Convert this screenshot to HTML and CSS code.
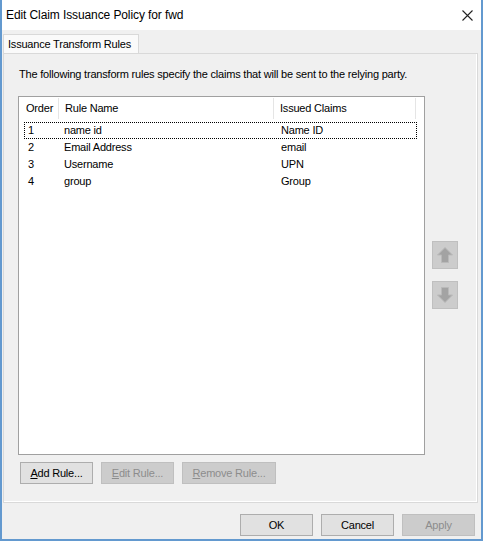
FILE: index.html
```html
<!DOCTYPE html>
<html>
<head>
<meta charset="utf-8">
<title>Edit Claim Issuance Policy for fwd</title>
<link rel="stylesheet" href="styles.css">
</head>
<body>
<div class="window">
  <div class="titlebar">
    <span class="title">Edit Claim Issuance Policy for fwd</span>
    <svg class="close" width="11" height="11" viewBox="0 0 11 11"><path d="M0.5 0.5 L10.5 10.5 M10.5 0.5 L0.5 10.5" stroke="#222" stroke-width="1.1" fill="none"/></svg>
  </div>
  <div class="content">
    <div class="tabs"><div class="tab">Issuance Transform Rules</div></div>
    <div class="panel">
      <p class="desc">The following transform rules specify the claims that will be sent to the relying party.</p>
      <div class="main">
        <div class="listview">
          <div class="lv-header">
            <div class="hc hc1">Order</div>
            <div class="hc hc2">Rule Name</div>
            <div class="hc hc3">Issued Claims</div>
          </div>
          <div class="rows">
            <div class="row focused"><span class="c1">1</span><span class="c2">name id</span><span class="c3">Name ID</span></div>
            <div class="row"><span class="c1">2</span><span class="c2">Email Address</span><span class="c3">email</span></div>
            <div class="row"><span class="c1">3</span><span class="c2">Username</span><span class="c3">UPN</span></div>
            <div class="row"><span class="c1">4</span><span class="c2">group</span><span class="c3">Group</span></div>
          </div>
        </div>
        <div class="side">
          <div class="arrow-btn">
            <svg width="16" height="16" viewBox="0 0 16 16"><polygon points="8,0.5 15.5,8 11.5,8 11.5,15.5 4.5,15.5 4.5,8 0.5,8" fill="#a3a3a3" stroke="#b9b9b9" stroke-width="1"/></svg>
          </div>
          <div class="arrow-btn">
            <svg width="16" height="16" viewBox="0 0 16 16"><polygon points="8,15.5 15.5,8 11.5,8 11.5,0.5 4.5,0.5 4.5,8 0.5,8" fill="#a3a3a3" stroke="#b9b9b9" stroke-width="1"/></svg>
          </div>
        </div>
      </div>
      <div class="rule-buttons">
        <button class="btn w73"><u>A</u>dd Rule...</button>
        <button class="btn w73 disabled"><u>E</u>dit Rule...</button>
        <button class="btn w94 disabled"><u>R</u>emove Rule...</button>
      </div>
    </div>
    <div class="footer">
      <button class="btn w73">OK</button>
      <button class="btn w73">Cancel</button>
      <button class="btn w73 disabled">Apply</button>
    </div>
  </div>
</div>
</body>
</html>
```
FILE: styles.css
```css
* { box-sizing: border-box; }
body {
  margin: 0;
  font-family: "Liberation Sans", Arial, sans-serif;
  font-size: 11px;
  letter-spacing: -0.2px;
  color: #000;
}
.window {
  width: 483px;
  height: 541px;
  border: 2px solid #6399cf;
  border-top: 0;
  display: flex;
  flex-direction: column;
  background: #f0f0f0;
}
.titlebar {
  height: 30px;
  flex: none;
  background: #fff;
  display: flex;
  align-items: center;
  justify-content: space-between;
  padding: 0 8px 0 4px;
}
.title {
  font-size: 12px;
  letter-spacing: -0.1px;
  color: #000;
}
.content {
  flex: 1;
  display: flex;
  flex-direction: column;
  padding: 4px 0 0 1px;
}
.tabs { display: flex; }
.tab {
  width: 136px;
  height: 19px;
  border: 1px solid #d9d9d9;
  border-bottom: 0;
  background: #fafafa;
  padding-left: 4px;
  line-height: 18px;
}
.panel {
  width: 475px;
  height: 450px;
  border: 1px solid #d9d9d9;
  box-shadow: inset -1px -1px 0 #fff;
  padding: 12px 0 0 14px;
}
.desc {
  margin: 0 0 0 1px;
  height: 16px;
  line-height: 16px;
}
.main {
  display: flex;
  gap: 7px;
  margin-top: 14px;
}
.listview {
  width: 407px;
  height: 359px;
  border: 1px solid #a0a0a0;
  background: #fff;
}
.lv-header {
  display: flex;
  height: 25px;
  padding-top: 1px;
}
.hc {
  height: 21px;
  line-height: 21px;
  border-right: 1px solid #e5e5e5;
  padding-left: 6px;
}
.hc1 { width: 40px; padding-left: 7px; }
.hc2 { width: 215px; }
.hc3 { width: 142px; }
.rows {
  margin-left: 5px;
  width: 393px;
}
.row {
  display: flex;
  height: 17px;
  line-height: 17px;
}
.row.focused {
  outline: 1px dotted #000;
  outline-offset: -1px;
}
.c1 { width: 35px; padding-left: 4px; }
.c2 { width: 215px; padding-left: 5px; }
.c3 { flex: 1; padding-left: 7px; }
.side {
  display: flex;
  flex-direction: column;
  gap: 12px;
  padding-top: 145px;
}
.arrow-btn {
  width: 26px;
  height: 28px;
  background: #cccccc;
  border: 1px solid #bfbfbf;
  display: flex;
  align-items: center;
  justify-content: center;
}
.rule-buttons {
  display: flex;
  gap: 8px;
  margin: 7px 0 0 2px;
}
.btn {
  height: 22px;
  border: 1px solid #adadad;
  background: #e1e1e1;
  font: inherit;
  letter-spacing: inherit;
  color: #000;
  padding: 0;
  margin: 0;
  text-align: center;
}
.btn.disabled {
  background: #cccccc;
  border-color: #bfbfbf;
  color: #8c8c8c;
}
.w73 { width: 73px; }
.w94 { width: 94px; }
.footer {
  display: flex;
  justify-content: flex-end;
  gap: 8px;
  padding: 11px 6px 0 0;
}
```
